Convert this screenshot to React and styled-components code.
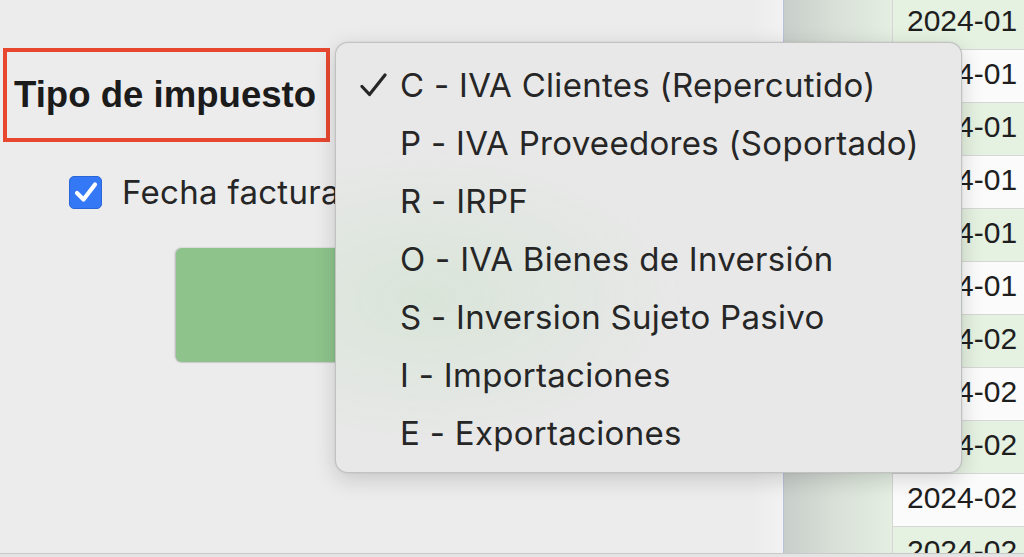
import React from "react";
import styled, { createGlobalStyle } from "styled-components";

const Global = createGlobalStyle`
  html, body { margin: 0; padding: 0; }
  body { background: #ececec; overflow: hidden; }
  * { box-sizing: border-box; }
`;

const Screen = styled.div`
  position: relative;
  width: 1024px;
  height: 557px;
  display: flex;
  flex-direction: column;
  background: #ececec;
  overflow: hidden;
`;

const Main = styled.div`
  flex: 0 0 553px;
  display: flex;
  flex-direction: row;
  overflow: hidden;
`;

const BottomBar = styled.div`
  flex: 1;
  border-top: 1px solid #c9c9c9;
  background: #e4e4e4;
`;

const LeftPanel = styled.div`
  flex: 0 0 783px;
  display: flex;
  flex-direction: column;
  align-items: flex-start;
  padding: 48px 0 0 3px;
  background: linear-gradient(to right, #ececec 0%, #ececec 96%, #f2f2f2 100%);
`;

const Highlight = styled.div`
  width: 327px;
  height: 94px;
  border: 4px solid #e8472f;
  display: flex;
  align-items: center;
  padding-left: 7px;
`;

const Label = styled.span`
  font-family: "Liberation Sans", Arial, sans-serif;
  font-weight: 700;
  font-size: 36.6px;
  line-height: 40px;
  color: #1b1b1b;
`;

const CheckRow = styled.label`
  display: flex;
  align-items: center;
  gap: 20px;
  margin: 30px 0 0 66px;
  white-space: nowrap;
`;

const CheckBox = styled.span`
  width: 33px;
  height: 33px;
  border-radius: 5px;
  background: #3478f6;
  border: 1px solid #2b66d9;
  display: flex;
  align-items: center;
  justify-content: center;
`;

const CheckText = styled.span`
  font-family: "Inter", "Liberation Sans", sans-serif;
  font-size: 33px;
  line-height: 40px;
  color: #262626;
  letter-spacing: 0.3px;
`;

const GreenButton = styled.div`
  margin: 36px 0 0 173px;
  width: 420px;
  height: 114px;
  border-radius: 6px;
  background: #8ec48c;
  box-shadow: -1px 0 2px rgba(0, 0, 0, 0.25), 0 1px 1px rgba(0, 0, 0, 0.08);
`;

const ShadeColumn = styled.div`
  flex: 0 0 109px;
  border-left: 1px solid #b9c2dc;
  background: linear-gradient(to right, #c8cec9 0%, #d8dfd7 45%, #e4efe2 100%);
`;

const TableColumn = styled.div`
  flex: 1;
  border-left: 1px solid #d6d6d6;
  overflow: hidden;
`;

const Rows = styled.div`
  margin-top: -3px;
  display: flex;
  flex-direction: column;
`;

const Cell = styled.div`
  height: 53px;
  flex: 0 0 53px;
  display: flex;
  align-items: center;
  padding-left: 14px;
  border-bottom: 1px solid #d7d7d7;
  background: ${(p) => (p.$green ? "#e5f1e1" : "#fbfbfb")};
  font-family: "Liberation Sans", Arial, sans-serif;
  font-size: 30px;
  color: #1e1e1e;
  white-space: nowrap;
  padding-bottom: 4px;
`;

const Menu = styled.div`
  position: absolute;
  left: 335px;
  top: 42px;
  width: 627px;
  height: 431px;
  border-radius: 13px;
  background:
    radial-gradient(ellipse 260px 150px at 90px 255px, rgba(205, 226, 205, 0.55), rgba(205, 226, 205, 0) 100%),
    #e8e8e8;
  border: 1px solid rgba(0, 0, 0, 0.16);
  box-shadow: 0 6px 22px rgba(0, 0, 0, 0.16), 0 0 2px rgba(0, 0, 0, 0.12);
  padding: 13px 0 9px 0;
  display: flex;
  flex-direction: column;
`;

const Item = styled.div`
  height: 58px;
  display: flex;
  align-items: center;
  font-family: "Inter", "Liberation Sans", sans-serif;
  font-size: 33px;
  letter-spacing: 0.3px;
  color: #262626;
  white-space: nowrap;
`;

const Mark = styled.span`
  width: 64px;
  display: flex;
  justify-content: flex-start;
  padding-left: 24px;
`;

const MenuCheck = () => (
  <svg width="27" height="24" viewBox="0 0 27 24">
    <path
      d="M2 13.5 L9.5 21.5 L25 2"
      fill="none"
      stroke="#262626"
      strokeWidth="3.2"
      strokeLinecap="round"
      strokeLinejoin="round"
    />
  </svg>
);

const BoxCheck = () => (
  <svg width="24" height="22" viewBox="0 0 24 22">
    <path
      d="M3 12 L9.5 18.5 L21 3.5"
      fill="none"
      stroke="#ffffff"
      strokeWidth="4.2"
      strokeLinecap="round"
      strokeLinejoin="round"
    />
  </svg>
);

const options = [
  "C - IVA Clientes (Repercutido)",
  "P - IVA Proveedores (Soportado)",
  "R - IRPF",
  "O - IVA Bienes de Inversión",
  "S - Inversion Sujeto Pasivo",
  "I - Importaciones",
  "E - Exportaciones",
];

const dates = [
  "2024-01", "2024-01", "2024-01", "2024-01", "2024-01", "2024-01",
  "2024-02", "2024-02", "2024-02", "2024-02", "2024-02",
];

export default function App() {
  return (
    <>
      <Global />
      <Screen>
        <Main>
          <LeftPanel>
            <Highlight>
              <Label>Tipo de impuesto</Label>
            </Highlight>
            <CheckRow>
              <CheckBox>
                <BoxCheck />
              </CheckBox>
              <CheckText>Fecha factura</CheckText>
            </CheckRow>
            <GreenButton />
          </LeftPanel>
          <ShadeColumn />
          <TableColumn>
            <Rows>
              {dates.map((d, i) => (
                <Cell key={i} $green={i % 2 === 0}>
                  {d}
                </Cell>
              ))}
            </Rows>
          </TableColumn>
        </Main>
        <BottomBar />
        <Menu>
          {options.map((o, i) => (
            <Item key={o}>
              <Mark>{i === 0 ? <MenuCheck /> : null}</Mark>
              {o}
            </Item>
          ))}
        </Menu>
      </Screen>
    </>
  );
}
